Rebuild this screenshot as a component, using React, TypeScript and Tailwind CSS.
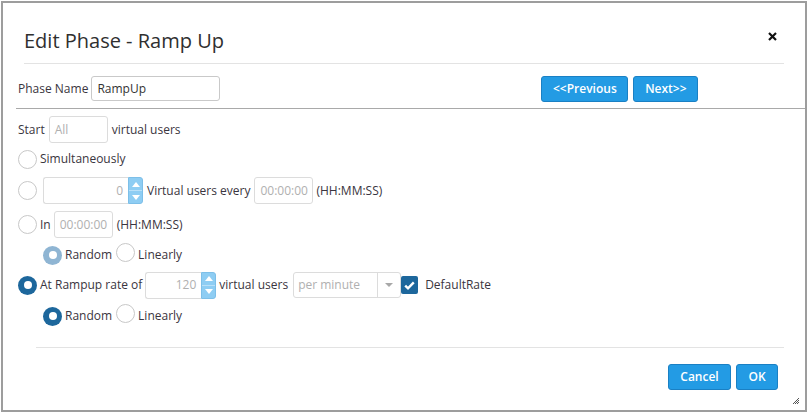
import React from "react"

const font = { fontFamily: '"Open Sans", "Liberation Sans", sans-serif' }

function Radio({ state = "off" }: { state?: "off" | "on" | "dim" }) {
  if (state === "off") {
    return <span className="inline-block w-[19px] h-[19px] rounded-full border border-[#c8c8c8] bg-white shrink-0" />
  }
  return (
    <span
      className={`inline-flex items-center justify-center w-[19px] h-[19px] rounded-full shrink-0 ${
        state === "on" ? "bg-[#1d679c]" : "bg-[#8fb5d3]"
      }`}
    >
      <span className="w-[8px] h-[8px] rounded-full bg-white" />
    </span>
  )
}

function Box({ w, value, right = false, h = 27 }: { w: number; value: string; right?: boolean; h?: number }) {
  return (
    <div
      className={`flex items-center border border-[#dcdcdc] rounded-[3px] bg-white text-[12px] text-[#b0b0b0] px-[5px] ${
        right ? "justify-end" : ""
      }`}
      style={{ width: w, height: h }}
    >
      {value}
    </div>
  )
}

function Spinner() {
  return (
    <div className="flex flex-col w-[15px] h-[27px] bg-[#8ecdf3] rounded-r-[3px] border border-[#7dbfe8]">
      <div className="flex-1 flex items-center justify-center border-b border-[#b9e0f8]">
        <svg width="8" height="5" viewBox="0 0 8 5"><path d="M0 5 L4 0 L8 5 Z" fill="#fff" /></svg>
      </div>
      <div className="flex-1 flex items-center justify-center">
        <svg width="8" height="5" viewBox="0 0 8 5"><path d="M0 0 L4 5 L8 0 Z" fill="#fff" /></svg>
      </div>
    </div>
  )
}

function Btn({ label, w }: { label: string; w: number }) {
  return (
    <button
      type="button"
      className="h-[26px] rounded-[3px] bg-[#239be4] border border-[#1a80c4] text-white text-[12px] font-semibold flex items-center justify-center"
      style={{ width: w }}
    >
      {label}
    </button>
  )
}

export default function App() {
  return (
    <div className="w-[808px] h-[413px] bg-white p-px" style={font}>
      <div className="relative w-full h-full border-2 border-[#9d9d9d] text-[#3a3540] text-[12px] flex flex-col">

        {/* ── Header ── */}
        <div className="mx-[21px] h-[61px] border-b border-[#e3e3e3] flex items-start justify-between">
          <h1 className="pt-[24px] text-[20px] leading-[28px] text-[#2f2f2f]">Edit Phase - Ramp Up</h1>
          <svg className="mt-[29px] mr-[7px]" width="9" height="9" viewBox="0 0 9 9">
            <path d="M1 1 L8 8 M8 1 L1 8" stroke="#111" strokeWidth="2.2" />
          </svg>
        </div>

        {/* ── Phase name ── */}
        <div className="ml-[13px] h-[45px] border-b border-[#a9a9a9] flex items-start pt-[12px]">
          <span className="ml-[2px] h-[25px] flex items-center">Phase Name</span>
          <div className="ml-[3px] w-[129px] h-[25px] border border-[#c9c9c9] rounded-[3px] flex items-center px-[5px] text-[#333]">
            RampUp
          </div>
          <div className="ml-[321px] flex gap-[5px]">
            <Btn label="<<Previous" w={87} />
            <Btn label="Next>>" w={65} />
          </div>
        </div>

        {/* ── Body ── */}
        <div className="pl-[15px] flex flex-col">
          <div className="mt-[7px] h-[27px] flex items-center gap-[4px]">
            <span>Start</span>
            <Box w={59} value="All" />
            <span>virtual users</span>
          </div>

          <div className="mt-[3px] h-[26px] flex items-center gap-[3px]">
            <Radio />
            <span>Simultaneously</span>
          </div>

          <div className="mt-[5px] h-[27px] flex items-center">
            <Radio />
            <div className="ml-[6px] flex">
              <div className="w-[85px] h-[27px] border border-[#dcdcdc] border-r-0 rounded-l-[3px] flex items-center justify-end pr-[5px] text-[#b0b0b0]">0</div>
              <Spinner />
            </div>
            <span className="ml-[4px]">Virtual users every</span>
            <div className="ml-[4px]"><Box w={59} value="00:00:00" /></div>
            <span className="ml-[3px]">(HH:MM:SS)</span>
          </div>

          <div className="mt-[7px] h-[27px] flex items-center">
            <Radio />
            <span className="ml-[3px]">In</span>
            <div className="ml-[3px]"><Box w={59} value="00:00:00" /></div>
            <span className="ml-[4px]">(HH:MM:SS)</span>
          </div>

          <div className="mt-[6px] h-[22px] flex items-center pl-[25px]">
            <Radio state="dim" />
            <span className="ml-[3px]">Random</span>
            <span className="ml-[4px]"><Radio /></span>
            <span className="ml-[3px]">Linearly</span>
          </div>

          <div className="mt-[6px] h-[26px] flex items-center">
            <Radio state="on" />
            <span className="ml-[3px]">At Rampup rate of</span>
            <div className="ml-[3px] flex">
              <div className="w-[56px] h-[27px] border border-[#dcdcdc] border-r-0 rounded-l-[3px] flex items-center justify-end pr-[5px] text-[#b0b0b0]">120</div>
              <Spinner />
            </div>
            <span className="ml-[3px]">virtual users</span>
            <div className="ml-[5px] w-[108px] h-[26px] border border-[#dcdcdc] rounded-[3px] flex items-center text-[#b0b0b0]">
              <span className="flex-1 pl-[4px]">per minute</span>
              <span className="w-[23px] h-full border-l border-[#dcdcdc] flex items-center justify-center">
                <svg width="8" height="4" viewBox="0 0 8 4"><path d="M0 0 L4 4 L8 0 Z" fill="#a8a8a8" /></svg>
              </span>
            </div>
            <span className="w-[17px] h-[18px] rounded-[2px] bg-[#1d679c] flex items-center justify-center">
              <svg width="11" height="9" viewBox="0 0 11 9">
                <path d="M1.2 4.6 L4 7.3 L9.8 1.4" stroke="#fff" strokeWidth="2.4" fill="none" />
              </svg>
            </span>
            <span className="ml-[7px]">DefaultRate</span>
          </div>

          <div className="mt-[7px] h-[22px] flex items-center pl-[25px]">
            <Radio state="on" />
            <span className="ml-[3px]">Random</span>
            <span className="ml-[4px]"><Radio /></span>
            <span className="ml-[3px]">Linearly</span>
          </div>
        </div>

        {/* ── Footer ── */}
        <div className="mt-[20px] ml-[33px] mr-[21px] border-t border-[#e3e3e3] pt-[16px] flex justify-end gap-[5px] pr-[6px]">
          <Btn label="Cancel" w={63} />
          <Btn label="OK" w={42} />
        </div>

        {/* resize grip */}
        <svg className="absolute right-[5px] bottom-[5px]" width="8" height="8" viewBox="0 0 8 8">
          <path d="M7 1 L1 7 M7 3 L3 7 M7 5 L5 7" stroke="#555" strokeWidth="1" />
        </svg>
      </div>
    </div>
  )
}
